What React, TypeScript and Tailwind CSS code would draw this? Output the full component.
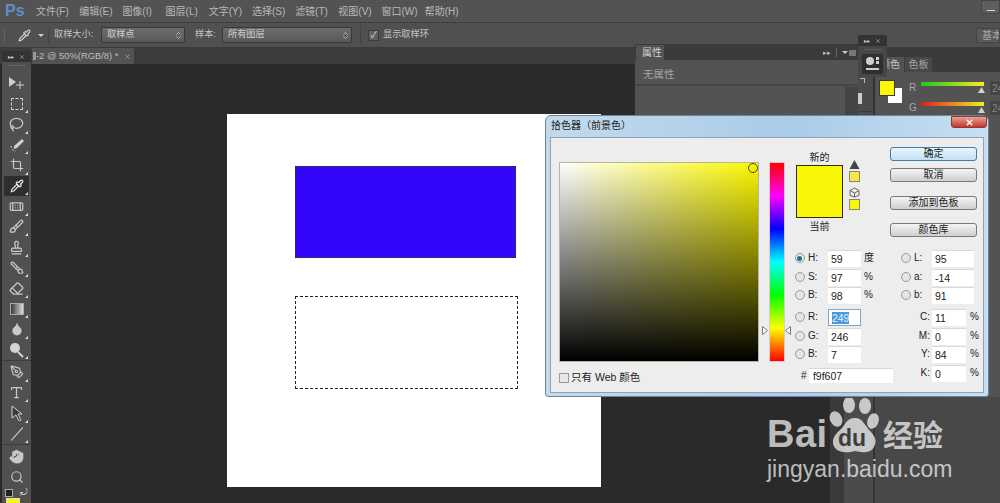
import { ReactNode } from "react";
import {
  Bandage,
  Brush,
  ChevronsUpDown,
  Crop,
  Droplet,
  Eraser,
  Hand,
  Lasso,
  PenTool,
  Pipette,
  Search,
  Slash,
  Stamp,
  Type,
  X,
} from "lucide-react";

const menus = ["文件(F)", "编辑(E)", "图像(I)", "图层(L)", "文字(Y)", "选择(S)", "滤镜(T)", "视图(V)", "窗口(W)", "帮助(H)"];

const MoveIcon = () => (
  <svg width="17" height="14" viewBox="0 0 17 14" className="text-[#cfcfcf]">
    <path d="M1 1l7 5-7 5z" fill="currentColor" />
    <path d="M12 5v8M8 9h8" stroke="currentColor" strokeWidth="1" fill="none" />
  </svg>
);

const MarqueeIcon = () => <div className="w-[12px] h-[12px] border border-dashed border-[#cfcfcf]" />;

const QuickSelectIcon = () => (
  <svg width="16" height="16" viewBox="0 0 16 16" className="text-[#cfcfcf]">
    <path d="M2 9a5 5 0 0 0 5 5" stroke="currentColor" strokeDasharray="2 1.5" fill="none" />
    <path d="M5 9l8-7 2 2-7 7-3 1z" fill="currentColor" />
  </svg>
);

const GradientIcon = () => (
  <div className="w-[14px] h-[12px] border border-[#aaa] bg-[linear-gradient(to_right,#3a3a3a,#dcdcdc)]" />
);

const DodgeIcon = () => (
  <svg width="16" height="16" viewBox="0 0 16 16" className="text-[#d4d4d4]">
    <circle cx="6" cy="6" r="5" fill="currentColor" />
    <path d="M9 10l5 5" stroke="currentColor" strokeWidth="2" />
  </svg>
);

const PathSelectIcon = () => (
  <svg width="14" height="16" viewBox="0 0 14 16" className="text-[#cfcfcf]">
    <path d="M2 1l10 8H8l3 6-2 1-3-6-4 3z" fill="#3c3c3c" stroke="currentColor" />
  </svg>
);

const tools: { icon: ReactNode; active?: boolean; sepAfter?: boolean; noCorner?: boolean }[] = [
  { icon: <MoveIcon />, noCorner: true },
  { icon: <MarqueeIcon /> },
  { icon: <Lasso size={15} /> },
  { icon: <QuickSelectIcon /> },
  { icon: <Crop size={14} /> },
  { icon: <Pipette size={14} className="text-[#e8e8e8]" />, active: true },
  { icon: <Bandage size={15} /> },
  { icon: <Brush size={15} /> },
  { icon: <Stamp size={15} /> },
  { icon: <Brush size={14} className="-scale-x-100" /> },
  { icon: <Eraser size={15} /> },
  { icon: <GradientIcon /> },
  { icon: <Droplet size={14} fill="#c8c8c8" /> },
  { icon: <DodgeIcon />, sepAfter: true },
  { icon: <PenTool size={14} /> },
  { icon: <Type size={15} /> },
  { icon: <PathSelectIcon /> },
  { icon: <Slash size={14} className="rotate-[-3deg]" />, sepAfter: true },
  { icon: <Hand size={15} fill="#c8c8c8" />, noCorner: true },
  { icon: <Search size={14} />, noCorner: true },
];

const MenuBar = () => (
  <div className="h-[23px] flex items-center bg-[#535353] border-b border-[#3f3f3f] text-[#b9b9b9] text-[10px]">
    <div className="w-[36px] pl-[5px] text-[16px] font-bold text-[#5f91c6]">Ps</div>
    {menus.map((m) => (
      <div key={m} className="w-[43.2px] whitespace-nowrap">
        {m}
      </div>
    ))}
    <div className="ml-auto self-start w-[19px] h-[14px] bg-[#5e5e5e] border border-[#444] rounded-b-[2px] flex items-end justify-center pb-[2px]">
      <div className="w-[8px] h-[1px] bg-[#d8d8d8]" />
    </div>
  </div>
);

const PsSelect = ({ label, w }: { label: string; w: string }) => (
  <div className={`${w} h-[16px] flex items-center justify-between pl-[5px] pr-[1px] rounded-[2px] border border-[#383838] bg-[linear-gradient(to_bottom,#6c6c6c,#595959)] text-[#d0d0d0] text-[9.2px]`}>
    <span>{label}</span>
    <ChevronsUpDown size={9} />
  </div>
);

const OptionsBar = () => (
  <div className="h-[25px] flex items-center bg-[#505050] border-b border-[#3b3b3b] text-[#c4c4c4] text-[9.2px]">
    <div className="ml-[4px] w-px h-[15px] border-l border-dotted border-[#777]" />
    <Pipette size={13} className="ml-[13px] text-[#d8d8d8]" />
    <div className="ml-[7px] w-0 h-0 border-x-[3px] border-x-transparent border-t-[3px] border-t-[#ccc]" />
    <div className="ml-[4px] w-px h-[16px] bg-[#434343]" />
    <span className="ml-[5px] w-[47px] whitespace-nowrap">取样大小:</span>
    <PsSelect label="取样点" w="w-[84px]" />
    <span className="ml-[10px] w-[27px] whitespace-nowrap">样本:</span>
    <PsSelect label="所有图层" w="w-[130px]" />
    <div className="ml-[8px] w-px h-[18px] bg-[#434343]" />
    <div className="ml-[7px] w-[11px] h-[11px] bg-[#5f5f5f] border border-[#3c3c3c] rounded-[1px] flex items-center justify-center text-[#ddd] text-[9px] leading-none">✓</div>
    <span className="ml-[4px] whitespace-nowrap">显示取样环</span>
    <div className="ml-auto w-[24px] h-[15px] bg-[#5a5a5a] border border-[#444] text-[#a8a8a8] text-[10px] pl-[5px] leading-[14px] whitespace-nowrap overflow-hidden">基本</div>
  </div>
);

const TabBar = () => (
  <div className="h-[16px] bg-[#3c3c3c] flex items-end pl-[32px]">
    <div className="w-[102px] h-[16px] bg-[#535353] flex items-center text-[#bdbdbd] text-[9.4px] pl-[1px]">
      <div className="w-[3px] h-[8px] bg-[#999]" />
      <span className="whitespace-nowrap">-2 @ 50%(RGB/8) *</span>
      <X size={7} className="ml-[6px]" />
    </div>
  </div>
);

const Canvas = () => (
  <div className="flex-1 bg-[#2a2a2a] pl-[227px] pt-[50px]">
    <div className="w-[374px] h-[373px] bg-white pl-[68px] pt-[52px]">
      <div className="w-[221px] h-[92px] bg-[#3305fb] border border-[#2a2a6a]" />
      <div className="mt-[38px] w-[223px] h-[93px] border border-dashed border-[#222]" />
    </div>
  </div>
);

const ToolPanel = () => (
  <div className="absolute left-[2px] top-[51px] bottom-0 w-[29px] bg-[#505050]">
    <div className="h-[11px] bg-[#333] flex items-center justify-between px-[6px] text-[#ccc]">
      <span className="text-[6px] leading-none">▸▸</span>
      <X size={6} />
    </div>
    <div className="h-[11px] pt-[3px] px-[6px]">
      <div className="h-px border-t border-dotted border-[#777]" />
    </div>
    {tools.map((t, i) => (
      <div key={i} className={t.sepAfter ? "border-b border-[#3d3d3d] mb-px" : ""}>
        <div className={`relative h-[20.5px] mx-[2px] flex items-center justify-center text-[#c8c8c8] ${t.active ? "bg-[#2e2e2e] rounded-[2px]" : ""}`}>
          {t.icon}
          {!t.noCorner && (
            <div className="absolute right-[1px] bottom-[1px] w-0 h-0 border-l-[3px] border-l-transparent border-b-[3px] border-b-[#ddd]" />
          )}
        </div>
      </div>
    ))}
    <div className="flex items-center justify-between px-[3px] h-[11px] text-[#ccc]">
      <div className="w-[8px] h-[8px] bg-[#222] border border-[#aaa]" />
      <span className="text-[9px] leading-none">⤾</span>
    </div>
    <div className="ml-[4px] w-[14px] h-[8px] bg-[#f9f607] border border-[#ddd]" />
  </div>
);

const PropertiesPanel = () => (
  <div className="absolute left-[635px] top-[44px] w-[223px] h-[346px] bg-[#535353] border-t border-[#3a3a3a] text-[10px]">
    <div className="h-[15px] bg-[#3b3b3b] flex items-end">
      <div className="ml-[1px] w-[28px] h-[15px] bg-[#535353] text-[#d4d4d4] pl-[6px] leading-[15px]">属性</div>
      <span className="ml-auto text-[#bbb] text-[7px] leading-[13px] self-center">▸▸</span>
      <div className="ml-[5px] w-px h-[9px] bg-[#666] self-center" />
      <div className="ml-[5px] mr-[2px] self-center flex items-center gap-[1px]">
        <div className="w-0 h-0 border-x-[3px] border-x-transparent border-t-[3px] border-t-[#ccc]" />
        <div className="w-[7px] h-[6px] bg-[#777]" />
      </div>
    </div>
    <div className="h-[26px] pl-[8px] pt-[7px] leading-[14px] text-[#a5a5a5] text-[10.5px] border-b-2 border-[#454545]">无属性</div>
    <div className="ml-auto mt-[1px] w-[13px] h-[300px] bg-[#444]" />
  </div>
);

const MiniPanel = () => (
  <div className="absolute left-[858px] top-[35px] w-[29px] h-[42px] bg-[#474747] rounded-t-[2px]">
    <div className="h-[11px] bg-[#333] rounded-t-[2px] flex items-center justify-between px-[6px] text-[#ccc]">
      <span className="text-[6px] leading-none">▸▸</span>
      <X size={6} />
    </div>
    <div className="mx-[6px] mt-[3px] border-t border-dotted border-[#777]" />
    <div className="mx-[4px] mt-[4px] h-[20px] bg-[#2f2f2f] rounded-[2px] px-[3px] pt-[2px]">
      <svg width="15" height="16" viewBox="0 0 15 16" className="text-[#cfcfcf]">
        <circle cx="5" cy="5" r="4" fill="currentColor" />
        <rect x="11" y="1" width="3" height="3" fill="currentColor" />
        <rect x="11" y="5" width="3" height="3" fill="currentColor" />
        <rect x="1" y="12" width="13" height="2" fill="currentColor" />
      </svg>
    </div>
  </div>
);

const Slider = ({ label, bar }: { label: string; bar: string }) => (
  <div className="flex h-[20px]">
    <span className="w-[12px] text-[#a9a9a9] text-[10px] leading-[15px]">{label}</span>
    <div className="w-[63px] mt-[2px] relative">
      <div className={`h-[4px] ${bar}`} />
      <div className="absolute right-[-1px] top-[5px] w-[7px] h-[6px] bg-[#d0d0d0] [clip-path:polygon(50%_0,100%_100%,0_100%)]" />
    </div>
    <div className="ml-[5px] w-[20px] h-[16px] shrink-0 bg-[#454545] border border-[#555] text-[#888] text-[10px] pl-[2px] leading-[15px] whitespace-nowrap">24</div>
  </div>
);

const ColorPanel = () => (
  <div className="flex-1 min-w-0 overflow-hidden bg-[#484848] border-l-2 border-[#333]">
    <div className="h-[9px] bg-[#3b3b3b]" />
    <div className="h-[15px] bg-[#3b3b3b] flex text-[10px] text-[#c8c8c8] leading-[15px]">
      <div className="w-[29px] bg-[#535353] pl-[5px] whitespace-nowrap">颜色</div>
      <div className="w-[27px] bg-[#484848] ml-px text-center text-[#a5a5a5] whitespace-nowrap">色板</div>
    </div>
    <div className="h-[325px] bg-[#535353] flex pt-[8px] pl-[4px]">
      <div className="relative w-[30px] h-[28px] shrink-0">
        <div className="absolute left-[9px] top-[8px] w-[14px] h-[15px] bg-white" />
        <div className="absolute left-0 top-0 w-[16px] h-[16px] bg-[#f9f607] border border-[#3a3a3a]" />
      </div>
      <div className="shrink-0">
        <Slider label="R" bar="bg-[linear-gradient(to_right,#22c322,#f2ee20)]" />
        <Slider label="G" bar="bg-[linear-gradient(to_right,#d52020,#f2ee20)]" />
      </div>
    </div>
  </div>
);

const Radio = ({ on }: { on?: boolean }) => (
  <div className="w-[10px] h-[10px] mt-[3px] rounded-full border border-[#9a9a9a] bg-[#e4e4e4] flex items-center justify-center">
    {on && <div className="w-[5px] h-[5px] rounded-full bg-[#2a6e96]" />}
  </div>
);

const Field = ({ value, w, selected }: { value: string; w: string; selected?: boolean }) => (
  <div className={`${w} h-[17px] bg-white text-[10.5px] leading-[16px] pl-[3px] border-t ${selected ? "border border-[#7fa8c8]" : "border-[#d8d8d8]"}`}>
    {selected ? <span className="bg-[#4d98dd] text-[#e6f0fa]">{value}</span> : value}
  </div>
);

const LeftRow = ({ label, value, unit, on, selected }: { label: string; value: string; unit?: string; on?: boolean; selected?: boolean }) => (
  <div className="h-[18.5px] flex">
    <Radio on={on} />
    <span className="ml-[3px] w-[20px] leading-[16px]">{label}</span>
    <Field value={value} w="w-[33px]" selected={selected} />
    {unit && <span className="ml-[3px] leading-[16px]">{unit}</span>}
  </div>
);

const LabRow = ({ label, value }: { label: string; value: string }) => (
  <div className="h-[18.5px] flex">
    <Radio />
    <span className="ml-[3px] w-[18px] leading-[16px]">{label}</span>
    <Field value={value} w="w-[42px]" />
  </div>
);

const CmykRow = ({ label, value }: { label: string; value: string }) => (
  <div className="h-[18.5px] flex">
    <span className="w-[31px] pr-[2px] text-right leading-[16px]">{label}</span>
    <Field value={value} w="w-[34px]" />
    <span className="ml-[4px] leading-[16px]">%</span>
  </div>
);

const DlgButton = ({ label, primary, className }: { label: string; primary?: boolean; className: string }) => (
  <div
    className={`w-[87px] h-[14px] rounded-[3px] border text-center text-[10px] leading-[12px] text-[#222] ${className} ${
      primary
        ? "border-[#3c7fb1] bg-[linear-gradient(to_bottom,#eaf6fd,#bfe0f2)]"
        : "border-[#7a7a7a] bg-[linear-gradient(to_bottom,#f4f4f4,#cfcfcf)]"
    }`}
  >
    {label}
  </div>
);

const HueArrow = ({ side }: { side: "left" | "right" }) => (
  <svg
    width="6"
    height="9"
    viewBox="0 0 6 9"
    className={`absolute top-[163px] ${side === "left" ? "-left-[8px]" : "-right-[7px]"}`}
  >
    <path d={side === "left" ? "M.5.5l5 4-5 4z" : "M5.500.5l-5 4 5 4z"} fill="#fff" stroke="#777" />
  </svg>
);

const ColorPicker = () => (
  <div className="absolute left-[545px] top-[115px] w-[444px] h-[282px] rounded-t-[6px] rounded-b-[3px] border border-[#6f8398] bg-[linear-gradient(to_right,#c3daec,#a9cce9_55%,#c7dff1)] text-[#222] text-[10px]">
    <div className="h-[21px] flex justify-between pl-[5px]">
      <span className="pt-[3px] text-[10px] leading-[14px] whitespace-nowrap">拾色器（前景色）</span>
      <div className="mr-[1px] w-[36px] h-[12px] rounded-b-[3px] border border-[#8c3a32] bg-[linear-gradient(to_bottom,#e6a398,#c4352a)] flex items-center justify-center text-white">
        <X size={9} strokeWidth={4} />
      </div>
    </div>
    <div className="mx-[4px] h-[256px] bg-[#ededed] border border-[#8fa3b5] flex pl-[8px] pt-[9px]">
      <div className="w-[201px]">
        <div className="relative mt-[15px] h-[200px] border border-[#b4b4a8] bg-[linear-gradient(to_top,#000,transparent),linear-gradient(to_right,#fff,#fbf700)]">
          <div className="absolute left-[188px] top-[0px] w-[10px] h-[10px] rounded-full border border-[#4a4a20]" />
        </div>
        <div className="mt-[8px] flex items-center">
          <div className="w-[10px] h-[10px] border border-[#9a9a9a] bg-[#e8e8e8]" />
          <span className="ml-[2px] text-[10.5px] whitespace-nowrap">只有 Web 颜色</span>
        </div>
      </div>
      <div className="relative ml-[10px] mt-[15px] w-[16px] h-[200px] border border-[#e3c9c9] bg-[linear-gradient(to_bottom,#f00,#f0f,#00f,#0ff,#0f0,#ff0,#f00)]">
        <HueArrow side="left" />
        <HueArrow side="right" />
      </div>
      <div className="ml-[10px] w-[189px]">
        <div className="h-[103px] flex">
          <div className="w-[95px] flex">
            <div className="ml-[1px] w-[47px]">
              <div className="h-[18px] pt-[5px] text-center leading-[12px]">新的</div>
              <div className="h-[53px] bg-[#f9f607] border border-[#2f2f10]" />
              <div className="mt-[2px] text-center leading-[14px]">当前</div>
            </div>
            <div className="ml-[6px] w-[11px] pt-[12px]">
              <svg width="11" height="11" viewBox="0 0 11 11" className="block text-[#444]">
                <path d="M5.500 1l5 9h-10z" fill="currentColor" />
              </svg>
              <div className="mt-[1px] w-[11px] h-[11px] bg-[#f2e84a] border border-[#8a8a5a]" />
              <svg width="11" height="11" viewBox="0 0 11 11" className="block mt-[5px] text-[#666]">
                <path d="M5.500 1l4.500 2.500v5L5.500 10 1 8.500v-5zM1 3.500l4.500 2.500 4.500-2.500M5.500 6v4" stroke="currentColor" fill="none" />
              </svg>
              <div className="mt-[1px] w-[11px] h-[11px] bg-[#f9f607] border border-[#8a8a5a]" />
            </div>
          </div>
          <div>
            <DlgButton label="确定" primary className="mb-[7px]" />
            <DlgButton label="取消" className="mb-[14px]" />
            <DlgButton label="添加到色板" className="mb-[13px]" />
            <DlgButton label="颜色库" className="" />
          </div>
        </div>
        <div className="flex">
          <div className="w-[106px]">
            <LeftRow label="H:" value="59" unit="度" on />
            <LeftRow label="S:" value="97" unit="%" />
            <LeftRow label="B:" value="98" unit="%" />
            <div className="h-[3.5px]" />
            <LeftRow label="R:" value="249" selected />
            <LeftRow label="G:" value="246" />
            <LeftRow label="B:" value="7" />
            <div className="mt-[3px] flex pl-[6px]">
              <span className="w-[8px] leading-[15px]">#</span>
              <div className="w-[84px] h-[15px] bg-white text-[10.5px] leading-[15px] pl-[4px] border-t border-[#d8d8d8]">f9f607</div>
            </div>
          </div>
          <div>
            <LabRow label="L:" value="95" />
            <LabRow label="a:" value="-14" />
            <LabRow label="b:" value="91" />
            <div className="h-[3.5px]" />
            <CmykRow label="C:" value="11" />
            <CmykRow label="M:" value="0" />
            <CmykRow label="Y:" value="84" />
            <CmykRow label="K:" value="0" />
          </div>
        </div>
      </div>
    </div>
  </div>
);

const Watermark = () => (
  <div className="absolute left-[767px] top-[397px] w-[182px] h-[90px] text-white/70 pointer-events-none">
    <div className="flex items-end h-[57px]">
      <span className="text-[38px] font-bold leading-[40px] w-[63px] tracking-[0.5px]">Bai</span>
      <div className="relative w-[52px] h-[56px] -ml-[1px]">
        <svg width="50" height="56" viewBox="0 0 50 56" className="block">
          <ellipse cx="20" cy="7" rx="6" ry="8" fill="currentColor" />
          <ellipse cx="36" cy="8" rx="6" ry="8" fill="currentColor" />
          <ellipse cx="7" cy="21" rx="6" ry="8" fill="currentColor" transform="rotate(-25 7 21)" />
          <ellipse cx="44" cy="23" rx="5.500" ry="8" fill="currentColor" transform="rotate(20 44 23)" />
          <path d="M26 20c8 0 10 8 15 13 6 6 7 11 4 16-3 6-11 6-19 4-7 2-16 2-20-3-4-6-2-12 5-18 5-4 6-12 15-12z" fill="currentColor" />
        </svg>
        <span className="absolute left-[9px] top-[28px] text-[#3d3d3d] font-bold text-[23px] leading-[24px]">du</span>
      </div>
      <span className="ml-[2px] text-[30px] font-bold leading-[36px] whitespace-nowrap">经验</span>
    </div>
    <div className="mt-[2px] text-[23px] leading-[26px] whitespace-nowrap">jingyan.baidu.com</div>
  </div>
);

export default function App() {
  return (
    <div className="relative w-[1000px] h-[503px] overflow-hidden flex flex-col bg-[#535353] font-['Liberation_Sans','Noto_Sans_CJK_SC',sans-serif]">
      <MenuBar />
      <OptionsBar />
      <div className="flex-1 flex min-h-0">
        <div className="w-[830px] shrink-0 flex flex-col">
          <TabBar />
          <Canvas />
        </div>
        <div className="w-[14px] shrink-0 bg-[#3a3a3a]" />
        <div className="w-[29px] shrink-0 bg-[#4b4b4b] flex flex-col items-start pl-[14px] pt-[30px]">
          <div className="ml-[2px] w-[5px] h-[5px] border-t border-r border-[#bbb]" />
          <div className="mt-[10px] w-[4px] h-[11px] bg-[#ccc]" />
          <div className="mt-[7px] w-[14px] border-t border-[#3a3a3a]" />
        </div>
        <ColorPanel />
      </div>
      <ToolPanel />
      <PropertiesPanel />
      <MiniPanel />
      <ColorPicker />
      <Watermark />
    </div>
  );
}
